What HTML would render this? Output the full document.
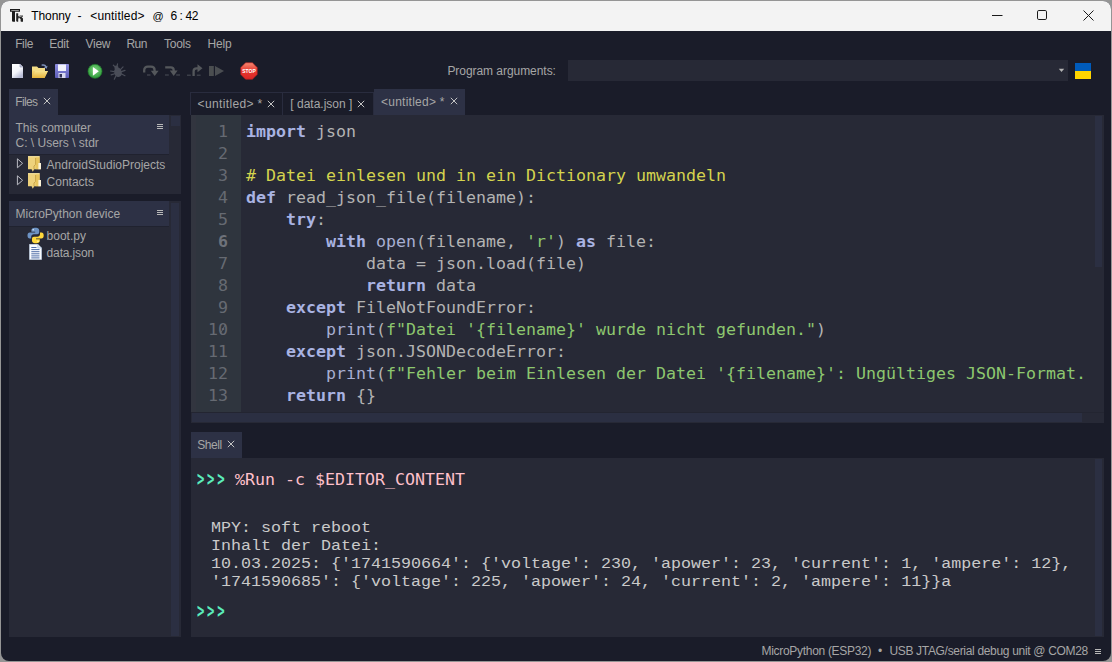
<!DOCTYPE html>
<html lang="de">
<head>
<meta charset="utf-8">
<title>Thonny</title>
<style>
*{box-sizing:border-box;margin:0;padding:0}
html,body{width:1112px;height:662px;overflow:hidden;background:#959595}
body{position:relative;font-family:"Liberation Sans",sans-serif;font-size:12px;color:#a6a6a6}
div,span,svg{position:absolute}
span.i{position:static}
#win{left:1px;top:1px;width:1110px;height:660px;border-radius:8px;background:#1a1c29;overflow:hidden}
#title{left:0;top:0;width:1110px;height:30px;background:#f3f3f3}
.t{white-space:pre;line-height:16px;height:16px;font-size:12px;color:#a6a6a6}
.bk{color:#000}
.p1{background:#272936}
.p2{background:#2d3145}
.code{font-family:"DejaVu Sans Mono","Liberation Mono",monospace;font-size:16.61px;line-height:22px;height:22px;white-space:pre;color:#b3b3b3}
.io{font-family:"Liberation Mono",monospace;font-size:14px;transform:scaleX(1.1905);transform-origin:0 0;line-height:18px;height:18px;white-space:pre;color:#cacaca}
.kw{color:#a9b3e2;font-weight:bold}
.bi{color:#a7afd2}
.st{color:#8dc76f}
.cm{color:#d4d44e}
.pr{color:#5bebbb;font-weight:bold;display:inline-block;position:static;letter-spacing:3.6px;transform-origin:0 58%;transform:translate(1px,0.5px) scale(0.74,1.27)}
.mg{color:#ffc0cb}
.ln{left:191px;width:37px;text-align:right;color:#666a72}
.cl{left:246px}
</style>
</head>
<body>
<div id="win"><div id="title"></div></div>

<!-- title bar -->
<div class="t bk" id="tt1" style="left:31.3px;top:8.400px;letter-spacing:-0.1px">Thonny</div>
<div class="t bk" id="tt2" style="left:77.400px;top:8.400px">-</div>
<div class="t bk" id="tt3" style="left:90.200px;top:8.400px;letter-spacing:0.18px">&lt;untitled&gt;</div>
<div class="t bk" id="tt4" style="left:152.400px;top:8.400px;font-size:11px">@</div>
<div class="t bk" id="tt5" style="left:170.400px;top:8.400px;letter-spacing:-0.4px">6 : 42</div>

<!-- menu -->
<div class="t" id="m1" style="left:15.2px;top:36px;letter-spacing:-0.4px">File</div>
<div class="t" id="m2" style="left:49.2px;top:36px;letter-spacing:-0.3px">Edit</div>
<div class="t" id="m3" style="left:85.6px;top:36px;letter-spacing:-0.3px">View</div>
<div class="t" id="m4" style="left:126.4px;top:36px;letter-spacing:-0.5px">Run</div>
<div class="t" id="m5" style="left:164px;top:36px;letter-spacing:-0.25px">Tools</div>
<div class="t" id="m6" style="left:207.5px;top:36px;letter-spacing:-0.2px">Help</div>

<!-- program arguments -->
<div class="t" id="pa" style="left:447.4px;top:63px;letter-spacing:-0.05px">Program arguments:</div>
<div class="p1" style="left:568px;top:60px;width:500px;height:21px"></div>


<!-- title icons -->
<svg id="tk" style="left:9px;top:8px" width="16" height="16" viewBox="0 0 16 16"><path d="M1 1.100h10v2.700H6V13.800H3.700l-.7-.8V3.800H1z" fill="#1c1c1c"/><path d="M2.300 2h7.500v.8H2.300z" fill="#b5b5b5"/><path d="M7.200 5.200h2V8.300l2.200-.9h2.500v1.400h-1.600l1.700 1.600v3.400h-1.900l-.5-.6V11l-1.300-1.100-1.100.5v3.400H8l-.8-.8z" fill="#222"/><path d="M9.600 9l3-1" stroke="#ddd" stroke-width=".7"/></svg>
<svg style="left:985px;top:5px" width="120" height="22" viewBox="0 0 120 22"><g fill="none" stroke="#1a1a1a" stroke-width="1"><path d="M7 10.5h10.5"/><rect x="52.5" y="5.5" width="9" height="9" rx="1.3"/><path d="M98.5 5.5l10 10M108.5 5.5l-10 10"/></g></svg>

<!-- toolbar icons -->
<svg id="ic" style="left:8px;top:60px" width="256" height="22" viewBox="0 0 256 22">
<defs>
<linearGradient id="gp" x1="0" y1="0" x2="0.6" y2="1"><stop offset="0" stop-color="#ffffff"/><stop offset="0.6" stop-color="#f4f5fb"/><stop offset="1" stop-color="#b9bdd6"/></linearGradient>
<linearGradient id="gf" x1="0" y1="0" x2="0" y2="1"><stop offset="0" stop-color="#f7e28e"/><stop offset="1" stop-color="#e6b43c"/></linearGradient>
<linearGradient id="gs" x1="0" y1="0" x2="0" y2="1"><stop offset="0" stop-color="#8f8fe0"/><stop offset="1" stop-color="#5c5cb8"/></linearGradient>
<radialGradient id="gg" cx="0.5" cy="0.4" r="0.6"><stop offset="0" stop-color="#7fd67f"/><stop offset="1" stop-color="#2e9a3a"/></radialGradient>
<linearGradient id="gr" x1="0" y1="0" x2="0" y2="1"><stop offset="0" stop-color="#f58a72"/><stop offset="0.5" stop-color="#e8362e"/><stop offset="1" stop-color="#d92626"/></linearGradient>
</defs>
<!-- new -->
<path d="M4 4h8l3 3v11H4z" fill="url(#gp)"/><path d="M12 4v3h3" fill="#c9cce0" stroke="#8a8fb0" stroke-width=".6"/>
<!-- open -->
<path d="M24 6.5h5l1.5 1.5H37v3H24z" fill="#f3dc86"/><path d="M24 18V8h1l0 3h14.8L36.5 18z" fill="url(#gf)"/><path d="M24 18l3.2-7H40l-3.5 7z" fill="url(#gf)"/><path d="M33.5 4.6c2.2-.9 4.3-.3 5 1.6l1.1-.4-.9 2.9-2.7-1.5 1.1-.4c-.6-1.100-2-1.400-3.300-.9z" fill="#7d90b8"/>
<!-- save -->
<rect x="47" y="4" width="14" height="14" rx="0.8" fill="url(#gs)"/><rect x="50" y="4.500" width="8" height="6.500" fill="#f2f3fb"/><rect x="50.5" y="13" width="7" height="5" fill="#d9daf0"/><rect x="51.5" y="14" width="2.500" height="3.500" fill="#33335a"/>
<!-- run -->
<circle cx="87" cy="11.300" r="7" fill="url(#gg)" stroke="#1e7a2a" stroke-width=".7"/><path d="M84.900 6.900v8.800l5.900-4.400z" fill="#fff"/>
<!-- bug -->
<g transform="rotate(-18 109.800 11.800)" fill="#4a4d58" stroke="#4a4d58" stroke-width="1.200" stroke-linecap="round"><ellipse cx="109.800" cy="12.400" rx="3.700" ry="4.500" stroke="none"/><circle cx="109.800" cy="7.400" r="2.100" stroke="none"/><path d="M108.600 6l-1-1.800M111 6l1-1.800M106.500 10.500l-3.300-1.700M113 10.500l3.300-1.700M106.300 12.700h-3.800M113.300 12.700h3.800M106.800 15l-2.600 2.700M112.800 15l2.600 2.700" fill="none"/></g>
<!-- step over -->
<path d="M136.200 12.500v-2.300c0-2.400 1.400-3.500 3.600-3.500h3.200c2.300 0 3.600 1.100 3.600 3.500v1.800" fill="none" stroke="#54575b" stroke-width="2.300"/>
<path d="M142.800 10.800h7.800l-3.900 5.200z" fill="#54575b"/><path d="M139 14.200h3.500v1.600H139z" fill="#3b3e48"/>
<!-- step into -->
<path d="M157.200 7.300h5.600c2 0 2.900 1 2.900 3v1" fill="none" stroke="#54575b" stroke-width="2.300"/><path d="M161.800 10.600h7.800l-3.900 5.400z" fill="#54575b"/><path d="M157 14.200h3.800v1.600H157zM168.200 14.200h3.800v1.600h-3.800z" fill="#3b3e48"/>
<!-- step out -->
<path d="M185.600 16v-4.800c0-2 1-2.900 2.900-2.900h2" fill="none" stroke="#54575b" stroke-width="2.300"/><path d="M189.500 4.300v8l5-4z" fill="#54575b"/><path d="M179 14.400h3.800v1.600H179zM188.800 14.400h3.800v1.600h-3.800z" fill="#3b3e48"/>
<!-- resume -->
<rect x="201" y="6" width="4.800" height="10" fill="#4b4e50"/><path d="M207 6v10l9-5z" fill="#4b4e52"/>
<!-- stop -->
<path d="M237.600 2.800h6.800l4.800 4.800v6.800l-4.800 4.800h-6.800l-4.800-4.800V7.600z" fill="url(#gr)" stroke="#c42020" stroke-width=".6"/>
<text x="241" y="13.100" font-family="Liberation Sans,sans-serif" font-weight="bold" font-size="5.600" fill="#fff" text-anchor="middle" textLength="13.500" lengthAdjust="spacingAndGlyphs">STOP</text>
</svg>

<!-- combobox arrow + flag -->
<svg style="left:1058px;top:68px" width="8" height="5" viewBox="0 0 8 5"><path d="M.8 .8h5.400l-2.700 3.200z" fill="#b4b4b4"/></svg>
<div style="left:1075px;top:63px;width:16px;height:8px;background:#005bbb"></div>
<div style="left:1075px;top:71px;width:16px;height:8px;background:#ffd500"></div>

<!-- files panel -->
<div class="p2" style="left:9px;top:89px;width:49px;height:26px"></div>
<div class="t" id="ft" style="left:15.2px;top:94px;letter-spacing:-0.6px">Files</div>
<div class="p1" style="left:9px;top:115px;width:172px;height:79px"></div>
<div class="p2" style="left:9px;top:115px;width:160px;height:39px"></div>
<div class="t" id="f1" style="left:15.5px;top:120px;letter-spacing:-0.05px">This computer</div>
<div class="t" id="f2" style="left:15.5px;top:135px">C: \ Users \ stdr</div>
<div class="t" id="f3" style="left:46.6px;top:157px">AndroidStudioProjects</div>
<div class="t" id="f4" style="left:46.6px;top:174px">Contacts</div>
<div class="p1" style="left:9px;top:201px;width:172px;height:436px"></div>
<div class="p2" style="left:9px;top:201px;width:160px;height:25px"></div>
<div class="t" id="f5" style="left:15.5px;top:206px">MicroPython device</div>
<div class="t" id="f6" style="left:46.6px;top:228px">boot.py</div>
<div class="t" id="f7" style="left:46.6px;top:245px;letter-spacing:-0.15px">data.json</div>

<!-- editor tabs -->
<div style="left:190px;top:92px;width:93px;height:23px;border:1px solid #292c3e;border-bottom:0"></div>
<div class="t" id="e1" style="left:197.6px;top:96px;letter-spacing:0.35px">&lt;untitled&gt; *</div>
<div style="left:283px;top:92px;width:91px;height:23px;border:1px solid #292c3e;border-bottom:0;border-left:0"></div>
<div class="t" id="e2" style="left:290.3px;top:96px">[ data.json ]</div>
<div class="p2" style="left:374px;top:89px;width:91px;height:26px"></div>
<div class="t" id="e3" style="left:381px;top:94px;letter-spacing:0.25px">&lt;untitled&gt; *</div>

<!-- editor -->
<div class="p1" style="left:191px;top:115px;width:913px;height:308px;overflow:hidden" id="ed">
</div>
<div style="left:191px;top:115px;width:50px;height:297px;background:#2f353e"></div>

<div style="left:191px;top:115px;width:5px;height:297px;background:#32353f"></div>
<div style="left:9px;top:154px;width:160px;height:1px;background:#20222f"></div>
<div style="left:9px;top:226px;width:160px;height:1px;background:#20222f"></div>
<!-- code -->
<div class="code ln" style="top:121px">1</div>
<div class="code cl" id="c1" style="top:121px"><span class="i kw">import</span> json</div>
<div class="code ln" style="top:143px">2</div>
<div class="code ln" style="top:165px">3</div>
<div class="code cl" id="c3" style="top:165px"><span class="i cm"># Datei einlesen und in ein Dictionary umwandeln</span></div>
<div class="code ln" style="top:187px">4</div>
<div class="code cl" id="c4" style="top:187px"><span class="i kw">def</span> read_json_file(filename):</div>
<div class="code ln" style="top:209px">5</div>
<div class="code cl" id="c5" style="top:209px">    <span class="i kw">try</span>:</div>
<div class="code ln" style="top:231px;font-weight:bold;color:#6e727a">6</div>
<div class="code cl" id="c6" style="top:231px">        <span class="i kw">with</span> <span class="i bi">open</span>(filename, <span class="i st">'r'</span>) <span class="i kw">as</span> file:</div>
<div class="code ln" style="top:253px">7</div>
<div class="code cl" id="c7" style="top:253px">            data = json.load(file)</div>
<div class="code ln" style="top:275px">8</div>
<div class="code cl" id="c8" style="top:275px">            <span class="i kw">return</span> data</div>
<div class="code ln" style="top:297px">9</div>
<div class="code cl" id="c9" style="top:297px">    <span class="i kw">except</span> FileNotFoundError:</div>
<div class="code ln" style="top:319px">10</div>
<div class="code cl" id="c10" style="top:319px">        <span class="i bi">print</span>(<span class="i st">f"Datei '{filename}' wurde nicht gefunden."</span>)</div>
<div class="code ln" style="top:341px">11</div>
<div class="code cl" id="c11" style="top:341px">    <span class="i kw">except</span> json.JSONDecodeError:</div>
<div class="code ln" style="top:363px">12</div>
<div class="code cl" id="c12" style="top:363px">        <span class="i bi">print</span>(<span class="i st">f"Fehler beim Einlesen der Datei '{filename}': Ungültiges JSON-Format.</span></div>
<div class="code ln" style="top:385px">13</div>
<div class="code cl" id="c13" style="top:385px">    <span class="i kw">return</span> {}</div>

<svg style="left:218px;top:321px" width="10" height="16" viewBox="0 0 10 16"><path d="M2.600 12.300L7 4.200" stroke="#666a72" stroke-width=".9" fill="none"/></svg>

<!-- shell -->
<div class="p2" style="left:191px;top:432px;width:51px;height:26px"></div>
<div class="t" id="sh" style="left:197.2px;top:437px;letter-spacing:-0.4px">Shell</div>
<div class="p1" style="left:191px;top:458px;width:913px;height:179px"></div>

<div class="code" id="s1" style="left:196px;top:469px"><span class="i pr">&gt;&gt;&gt;</span></div>
<div class="code mg" id="s1b" style="left:235px;top:469px"><span class="i" style="font-family:'Liberation Mono',monospace">%</span>Run -c $EDITOR_CONTENT</div>
<div class="io" id="s2" style="left:201px;top:519px"> MPY: soft reboot</div>
<div class="io" id="s3" style="left:201px;top:537px"> Inhalt der Datei:</div>
<div class="io" id="s4" style="left:201px;top:555px"> 10.03.2025: {'1741590664': {'voltage': 230, 'apower': 23, 'current': 1, 'ampere': 12},</div>
<div class="io" id="s5" style="left:201px;top:573px"> '1741590685': {'voltage': 225, 'apower': 24, 'current': 2, 'ampere': 11}}a</div>
<div class="code" id="s6" style="left:196px;top:601px"><span class="i pr">&gt;&gt;&gt;</span></div>


<!-- close marks and menu marks -->
<svg style="left:42px;top:96px" width="10" height="10" viewBox="0 0 10 10"><path d="M1.7999999999999998 1.7999999999999998l6.4 6.4M8.2 1.7999999999999998l-6.4 6.4" stroke="#c4c4c4" stroke-width="1" fill="none"/></svg>
<svg style="left:266.2px;top:98.5px" width="10" height="10" viewBox="0 0 10 10"><path d="M1.7999999999999998 1.7999999999999998l6.4 6.4M8.2 1.7999999999999998l-6.4 6.4" stroke="#c4c4c4" stroke-width="1" fill="none"/></svg>
<svg style="left:356.1px;top:98.5px" width="10" height="10" viewBox="0 0 10 10"><path d="M1.7999999999999998 1.7999999999999998l6.4 6.4M8.2 1.7999999999999998l-6.4 6.4" stroke="#c4c4c4" stroke-width="1" fill="none"/></svg>
<svg style="left:449.1px;top:95.7px" width="10" height="10" viewBox="0 0 10 10"><path d="M1.7999999999999998 1.7999999999999998l6.4 6.4M8.2 1.7999999999999998l-6.4 6.4" stroke="#c4c4c4" stroke-width="1" fill="none"/></svg>
<svg style="left:226px;top:439px" width="10" height="10" viewBox="0 0 10 10"><path d="M1.7999999999999998 1.7999999999999998l6.4 6.4M8.2 1.7999999999999998l-6.4 6.4" stroke="#c4c4c4" stroke-width="1" fill="none"/></svg>
<svg style="left:157px;top:124px" width="7" height="6" viewBox="0 0 7 6"><path d="M0 .5h6M0 2.500h6M0 4.500h6" stroke="#b8b8b8" stroke-width="1" fill="none"/></svg>
<svg style="left:157px;top:210px" width="7" height="6" viewBox="0 0 7 6"><path d="M0 .5h6M0 2.500h6M0 4.500h6" stroke="#b8b8b8" stroke-width="1" fill="none"/></svg>
<svg style="left:1095px;top:649px" width="7" height="6" viewBox="0 0 7 6"><path d="M0 .5h6M0 2.500h6M0 4.500h6" stroke="#b8b8b8" stroke-width="1" fill="none"/></svg>

<!-- tree icons -->
<svg style="left:16px;top:157px" width="8" height="30" viewBox="0 0 8 30"><path d="M1.400 1.800v9l5.200-4.500zM1.400 18.800v9l5.200-4.500z" fill="none" stroke="#b9bac2" stroke-width="1"/></svg>
<svg id="fo1" style="left:27px;top:155px" width="15" height="18" viewBox="0 0 15 18"><path d="M1 1.200h11.600v6.800h1.400v6.200H7.200l-1.400 2.600-1.200-2.600H1z" fill="#eed27c"/><path d="M8.600 2.200h4v12h-4z" fill="#e8c55e"/><path d="M11.400 8h2.600v6.200h-2.600z" fill="#fbf3d8"/><path d="M8.600 3v6.500l-1.600 1.500v3.200" fill="none" stroke="#c9a548" stroke-width="1"/><path d="M1 1.200h11.600v1H1z" fill="#f7e4a0"/></svg>
<svg id="fo2" style="left:27px;top:172px" width="15" height="18" viewBox="0 0 15 18"><path d="M1 1.200h11.600v6.800h1.400v6.200H7.200l-1.400 2.600-1.200-2.600H1z" fill="#eed27c"/><path d="M8.600 2.200h4v12h-4z" fill="#e8c55e"/><path d="M11.400 8h2.600v6.200h-2.600z" fill="#fbf3d8"/><path d="M8.600 3v6.500l-1.600 1.500v3.200" fill="none" stroke="#c9a548" stroke-width="1"/><path d="M1 1.200h11.600v1H1z" fill="#f7e4a0"/></svg>
<svg id="py" style="left:27px;top:227px" width="17" height="17" viewBox="0 0 17 17"><path d="M7.800 .8c-2.300 0-3.400 1-3.400 2.400v1.600h3.800v.8H2.800C1.300 5.600.5 6.800.5 8.600s.8 3 2.300 3h1.400V9.800c0-1.400 1.200-2.500 2.600-2.500h3.400c1.200 0 2-.9 2-2V3.200c0-1.400-1.300-2.400-3-2.400z" fill="#6d93c4"/><path d="M9.400 16.200c2.300 0 3.400-1 3.400-2.400v-1.600H9v-.8h5.400c1.500 0 2.300-1.200 2.300-3s-.8-3-2.300-3H13v1.800c0 1.400-1.200 2.500-2.600 2.500H7c-1.200 0-2 .9-2 2v2.100c0 1.400 1.300 2.400 3 2.400z" fill="#ffd93b"/><circle cx="6.200" cy="2.700" r=".8" fill="#dbe7f5"/><circle cx="11" cy="14.300" r=".8" fill="#fff6c9"/></svg>
<svg id="doc" style="left:29px;top:244px" width="13" height="16" viewBox="0 0 13 16"><path d="M.5 .3h8.300l3.700 3.700v11.500H.5z" fill="#fafcff" stroke="#c8d8ee" stroke-width=".6"/><path d="M8.800 .3v3.700h3.700" fill="#dfe9f7" stroke="#9fb4d6" stroke-width=".6"/><path d="M2.300 3.500h5.200M2.300 5.600h8.200M2.300 7.700h8.200M2.300 9.800h8.200M2.300 11.900h8.200M2.300 13.900h8.200" stroke="#3b5c9c" stroke-width=".9"/></svg>

<!-- scrollbars -->
<div style="background:#2b2f42;left:171px;top:116px;width:9px;height:10px"></div>
<div style="background:#2b2f42;left:171px;top:203px;width:8px;height:433px"></div>
<div style="background:#2b2f42;left:1095px;top:116px;width:7px;height:151px"></div>
<div style="left:191px;top:412px;width:913px;height:1px;background:#232531"></div>
<div style="background:#2b2f42;left:192px;top:413px;width:890px;height:9px"></div>
<div style="background:#2b2f42;left:1095px;top:459px;width:7px;height:177px"></div>

<!-- status -->
<div class="t" id="sb" style="left:761.5px;top:643px;letter-spacing:-0.3px">MicroPython (ESP32)</div>
<div class="t" id="sb2" style="left:878px;top:643px">•</div>
<div class="t" id="sb3" style="left:889.4px;top:643px;letter-spacing:-0.32px">USB JTAG/serial debug unit @ COM28</div>
</body>
</html>
